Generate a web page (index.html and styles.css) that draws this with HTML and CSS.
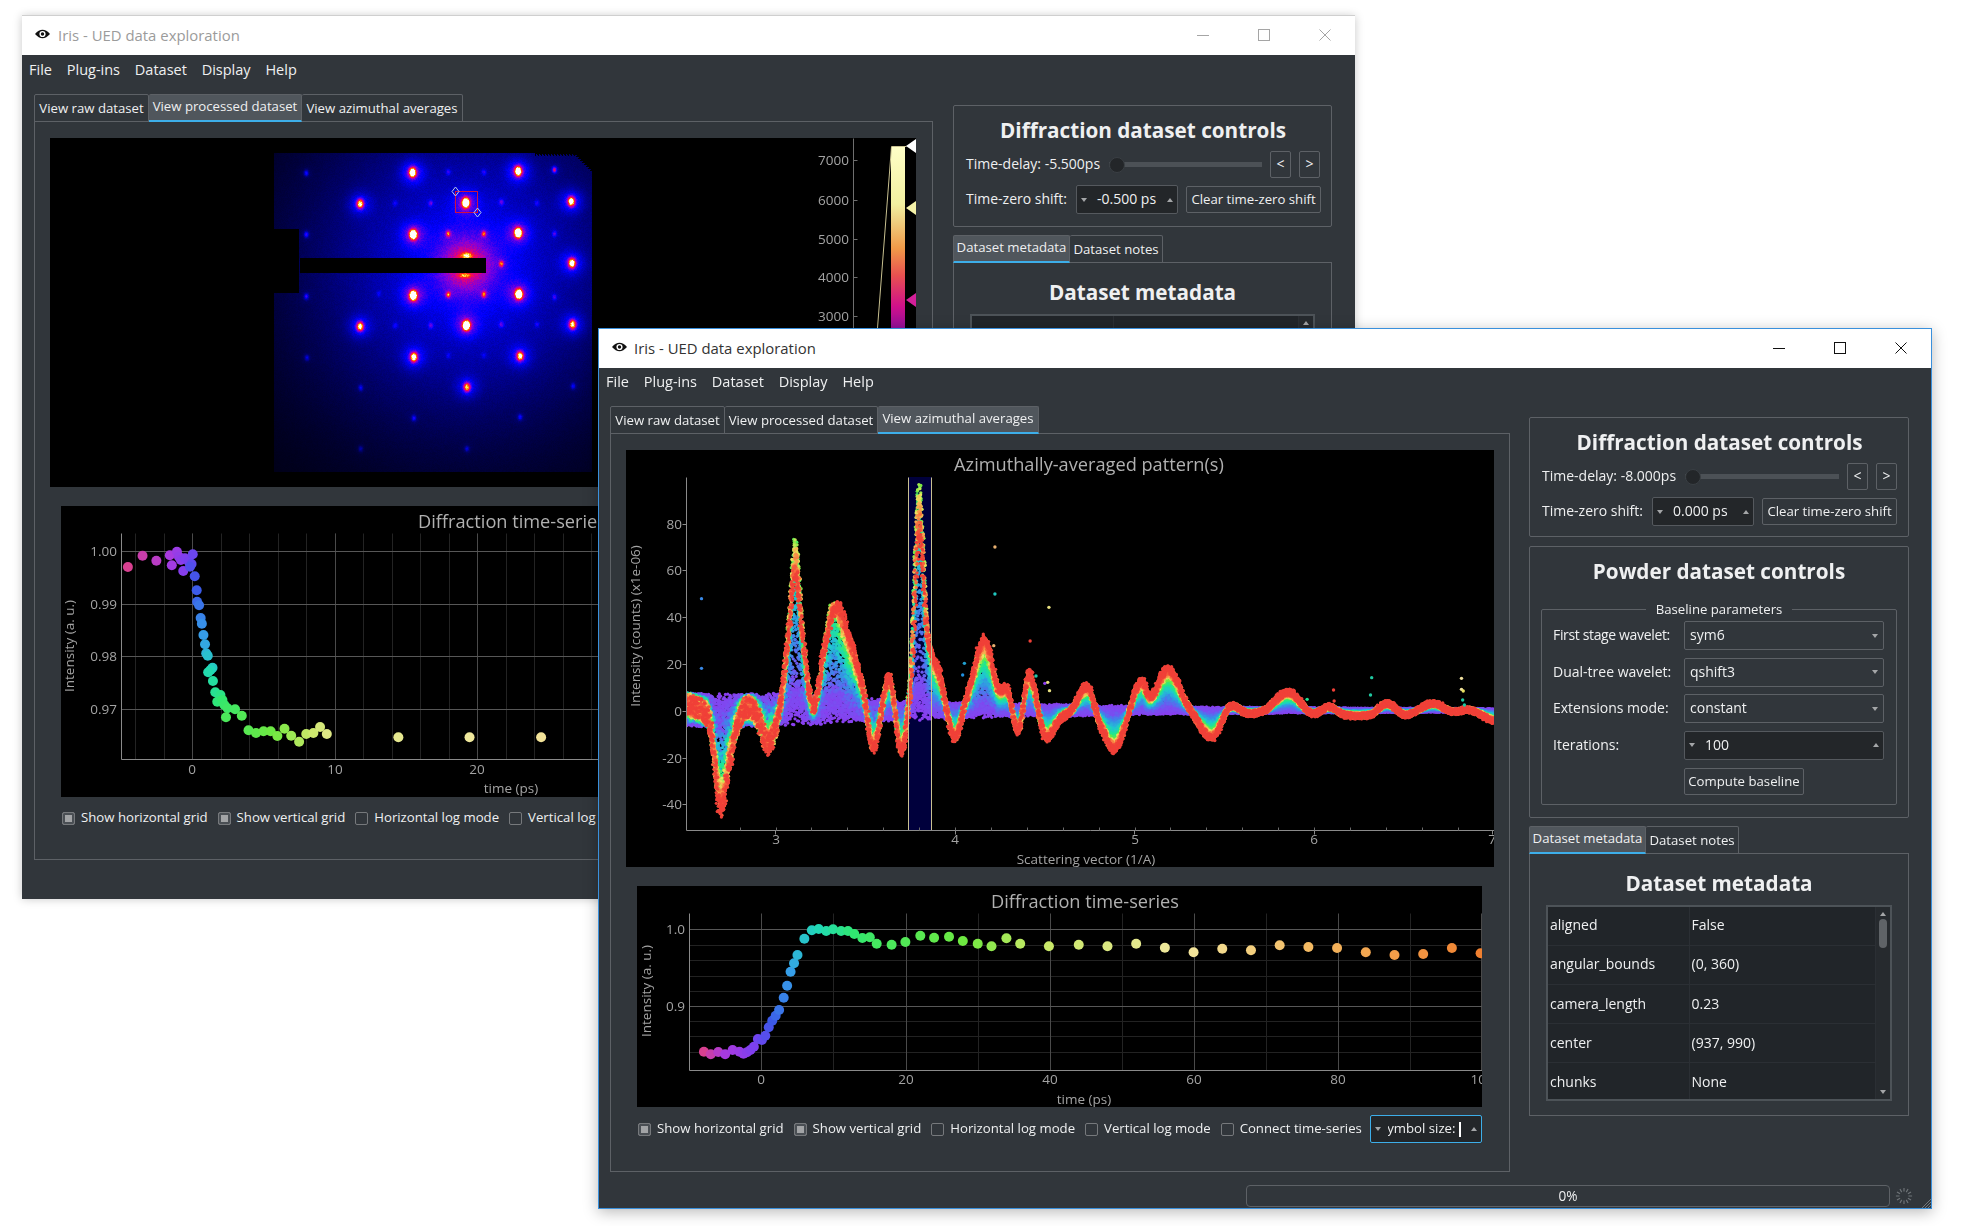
FILE: index.html
```html
<!DOCTYPE html>
<html lang="en">
<head>
<meta charset="utf-8">
<title>Iris - UED data exploration</title>
<link rel="stylesheet" href="styles.css">
<script src="script.js" defer></script>
</head>
<body>
<svg class="defs" width="0" height="0" aria-hidden="true">
  <symbol id="eye" viewBox="0 0 16 12"><path d="M0 6Q8-3 16 6Q8 15 0 6Z" fill="#111"/><circle cx="8" cy="6" r="3.3" fill="#fff"/><circle cx="8" cy="6" r="1.8" fill="#111"/></symbol>
  <symbol id="min" viewBox="0 0 12 12"><path d="M0 6.5H12" stroke="currentColor" fill="none"/></symbol>
  <symbol id="max" viewBox="0 0 12 12"><rect x=".5" y=".5" width="11" height="11" stroke="currentColor" fill="none"/></symbol>
  <symbol id="close" viewBox="0 0 12 12"><path d="M.5.5L11.5 11.5M11.5.5L.5 11.5" stroke="currentColor" fill="none"/></symbol>
</svg>
<main class="desktop">

<section class="window win-back">
  <header class="titlebar">
    <svg class="app-icon"><use href="#eye"/></svg>
    <span class="win-title">Iris - UED data exploration</span>
    <div class="win-buttons">
      <svg class="win-btn"><use href="#min"/></svg>
      <svg class="win-btn"><use href="#max"/></svg>
      <svg class="win-btn"><use href="#close"/></svg>
    </div>
  </header>
  <nav class="menubar"><span>File</span><span>Plug-ins</span><span>Dataset</span><span>Display</span><span>Help</span></nav>
  <div class="workspace">
    <div class="viewer">
      <div class="tabs">
        <span class="tab tab-raw">View raw dataset</span>
        <span class="tab tab-proc tab-on">View processed dataset</span>
        <span class="tab tab-azim">View azimuthal averages</span>
      </div>
      <div class="pane viewer-pane">
        <div class="plot plot-image">
          <canvas id="diffraction" width="866" height="349"></canvas>
          <svg class="labels" width="866" height="349">
            <text class="tick end" x="799" y="27">7000</text>
            <text class="tick end" x="799" y="67">6000</text>
            <text class="tick end" x="799" y="106">5000</text>
            <text class="tick end" x="799" y="144">4000</text>
            <text class="tick end" x="799" y="183">3000</text>
          </svg>
        </div>
        <div class="plot plot-series1">
          <canvas id="series1" width="845" height="291"></canvas>
          <svg class="labels" width="845" height="291">
            <text class="plot-title mid" x="451" y="22">Diffraction time-series</text>
            <text class="tick end" x="56" y="50">1.00</text>
            <text class="tick end" x="56" y="103">0.99</text>
            <text class="tick end" x="56" y="155">0.98</text>
            <text class="tick end" x="56" y="208">0.97</text>
            <text class="tick mid" transform="translate(13 140) rotate(-90)">Intensity (a. u.)</text>
            <text class="tick mid" x="131" y="268">0</text>
            <text class="tick mid" x="274" y="268">10</text>
            <text class="tick mid" x="416" y="268">20</text>
            <text class="tick mid" x="450" y="287">time (ps)</text>
          </svg>
        </div>
        <div class="check-row check-row-back">
          <label class="check on"><i></i>Show horizontal grid</label>
          <label class="check on"><i></i>Show vertical grid</label>
          <label class="check"><i></i>Horizontal log mode</label>
          <label class="check"><i></i>Vertical log mode</label>
        </div>
      </div>
    </div>
    <aside class="side">
      <div class="group group-controls">
        <h2>Diffraction dataset controls</h2>
        <div class="form-row">
          <span class="value-label">Time-delay: -5.500ps</span>
          <div class="slider"><i></i></div>
          <span class="btn btn-step">&lt;</span><span class="btn btn-step">&gt;</span>
        </div>
        <div class="form-row">
          <span class="shift-label">Time-zero shift:</span>
          <div class="spin spin-shift"><b class="arrow-down"></b><span>-0.500 ps</span><b class="arrow-up"></b></div>
          <span class="btn btn-clear">Clear time-zero shift</span>
        </div>
      </div>
      <div class="tabs">
        <span class="tab tab-meta tab-on">Dataset metadata</span>
        <span class="tab tab-notes">Dataset notes</span>
      </div>
      <div class="pane meta-pane">
        <h2>Dataset metadata</h2>
        <div class="meta-table">
          <table><tr><td>aligned</td><td>False</td></tr></table>
          <div class="scrollbar"><b class="arrow-up"></b><i></i><b class="arrow-down"></b></div>
        </div>
      </div>
    </aside>
  </div>
</section>

<section class="window win-front">
  <header class="titlebar">
    <svg class="app-icon"><use href="#eye"/></svg>
    <span class="win-title">Iris - UED data exploration</span>
    <div class="win-buttons">
      <svg class="win-btn"><use href="#min"/></svg>
      <svg class="win-btn"><use href="#max"/></svg>
      <svg class="win-btn"><use href="#close"/></svg>
    </div>
  </header>
  <nav class="menubar"><span>File</span><span>Plug-ins</span><span>Dataset</span><span>Display</span><span>Help</span></nav>
  <div class="workspace">
    <div class="viewer">
      <div class="tabs">
        <span class="tab tab-raw">View raw dataset</span>
        <span class="tab tab-proc">View processed dataset</span>
        <span class="tab tab-azim tab-on">View azimuthal averages</span>
      </div>
      <div class="pane viewer-pane">
        <div class="plot plot-pattern">
          <canvas id="pattern" width="868" height="417"></canvas>
          <svg class="labels" width="868" height="417">
            <text class="plot-title mid" x="463" y="21">Azimuthally-averaged pattern(s)</text>
            <text class="tick end" x="56" y="79">80</text>
            <text class="tick end" x="56" y="125">60</text>
            <text class="tick end" x="56" y="172">40</text>
            <text class="tick end" x="56" y="219">20</text>
            <text class="tick end" x="56" y="266">0</text>
            <text class="tick end" x="56" y="313">-20</text>
            <text class="tick end" x="56" y="359">-40</text>
            <text class="tick mid" transform="translate(14 176) rotate(-90)">Intensity (counts) (x1e-06)</text>
            <text class="tick mid" x="150" y="394">3</text>
            <text class="tick mid" x="329" y="394">4</text>
            <text class="tick mid" x="509" y="394">5</text>
            <text class="tick mid" x="688" y="394">6</text>
            <text class="tick mid" x="866" y="394">7</text>
            <text class="tick mid" x="460" y="414">Scattering vector (1/A)</text>
          </svg>
        </div>
        <div class="plot plot-series2">
          <canvas id="series2" width="845" height="221"></canvas>
          <svg class="labels" width="845" height="221">
            <text class="plot-title mid" x="448" y="22">Diffraction time-series</text>
            <text class="tick end" x="48" y="48">1.0</text>
            <text class="tick end" x="48" y="125">0.9</text>
            <text class="tick mid" transform="translate(14 105) rotate(-90)">Intensity (a. u.)</text>
            <text class="tick mid" x="124" y="198">0</text>
            <text class="tick mid" x="269" y="198">20</text>
            <text class="tick mid" x="413" y="198">40</text>
            <text class="tick mid" x="557" y="198">60</text>
            <text class="tick mid" x="701" y="198">80</text>
            <text class="tick mid" x="845" y="198">100</text>
            <text class="tick mid" x="447" y="218">time (ps)</text>
          </svg>
        </div>
        <div class="check-row">
          <label class="check on"><i></i>Show horizontal grid</label>
          <label class="check on"><i></i>Show vertical grid</label>
          <label class="check"><i></i>Horizontal log mode</label>
          <label class="check"><i></i>Vertical log mode</label>
          <label class="check"><i></i>Connect time-series</label>
          <div class="spin spin-symbol"><b class="arrow-down"></b><span class="clip"><span>Symbol size: </span><u></u></span><b class="arrow-up"></b></div>
        </div>
      </div>
    </div>
    <aside class="side">
      <div class="group group-controls">
        <h2>Diffraction dataset controls</h2>
        <div class="form-row">
          <span class="value-label">Time-delay: -8.000ps</span>
          <div class="slider"><i></i></div>
          <span class="btn btn-step">&lt;</span><span class="btn btn-step">&gt;</span>
        </div>
        <div class="form-row">
          <span class="shift-label">Time-zero shift:</span>
          <div class="spin spin-shift"><b class="arrow-down"></b><span>0.000 ps</span><b class="arrow-up"></b></div>
          <span class="btn btn-clear">Clear time-zero shift</span>
        </div>
      </div>
      <div class="group group-powder">
        <h2>Powder dataset controls</h2>
        <fieldset class="baseline">
          <legend>Baseline parameters</legend>
          <div class="form-grid">
            <span class="label-tight">First stage wavelet:</span><div class="combo">sym6<b class="arrow-down"></b></div>
            <span>Dual-tree wavelet:</span><div class="combo">qshift3<b class="arrow-down"></b></div>
            <span>Extensions mode:</span><div class="combo">constant<b class="arrow-down"></b></div>
            <span>Iterations:</span><div class="spin spin-iter"><b class="arrow-down"></b><span>100</span><b class="arrow-up"></b></div>
            <span></span><div class="btn btn-compute">Compute baseline</div>
          </div>
        </fieldset>
      </div>
      <div class="tabs">
        <span class="tab tab-meta tab-on">Dataset metadata</span>
        <span class="tab tab-notes">Dataset notes</span>
      </div>
      <div class="pane meta-pane">
        <h2>Dataset metadata</h2>
        <div class="meta-table">
          <table>
            <tr><td>aligned</td><td>False</td></tr>
            <tr><td>angular_bounds</td><td>(0, 360)</td></tr>
            <tr><td>camera_length</td><td>0.23</td></tr>
            <tr><td>center</td><td>(937, 990)</td></tr>
            <tr><td>chunks</td><td>None</td></tr>
          </table>
          <div class="scrollbar"><b class="arrow-up"></b><i></i><b class="arrow-down"></b></div>
        </div>
      </div>
    </aside>
  </div>
  <footer class="statusbar">
    <div class="progress">0%</div>
    <svg class="spinner" viewBox="0 0 20 20"><path d="M10 1V5M12.5 5.67L14.5 2.2M14.33 7.5L17.8 5.5M15 10H19M14.33 12.5L17.8 14.5M12.5 14.33L14.5 17.8M10 15V19M7.5 14.33L5.5 17.8M5.67 12.5L2.2 14.5M1 10H5M5.67 7.5L2.2 5.5M7.5 5.67L5.5 2.2" stroke="#6f7478" stroke-width="1.3" fill="none"/></svg>
    <svg class="grip" viewBox="0 0 10 10"><path d="M10 1L1 10M10 4L4 10M10 7L7 10" stroke="#72777b" fill="none"/></svg>
  </footer>
</section>
</main>
</body>
</html>
```
FILE: styles.css
```css
* { box-sizing: border-box; }
html, body { margin: 0; padding: 0; background: #fff; }
body { width: 1961px; height: 1226px; overflow: hidden; font: 14px/1.2 "Open Sans", "Noto Sans", sans-serif; color: #eff0f1; }
.defs { position: absolute; }
.desktop { position: relative; width: 1961px; height: 1226px; }

.window { position: absolute; display: flex; flex-direction: column; background: #31363b; overflow: hidden; }
.win-back { left: 22px; top: 16px; width: 1333px; height: 883px; box-shadow: 0 -1px 0 #cfcfcf, 0 0 9px rgba(0,0,0,.22); }
.win-front { left: 598px; top: 328px; width: 1334px; height: 881px; border: 1px solid #3a90dc; box-shadow: 0 3px 14px rgba(0,0,0,.28); }

.titlebar { flex: none; height: 39px; display: flex; align-items: center; background: #fff; padding-left: 13px; color: #333; font-size: 14.9px; }
.win-back .titlebar { color: #9b9b9b; }
.app-icon { width: 15px; height: 12px; margin-right: 7px; margin-top: -3px; }
.win-back .app-icon { margin-right: 8px; }
.win-title { margin-top: 1px; }
.win-buttons { margin-left: auto; display: flex; gap: 49px; padding-right: 24px; color: #111; margin-top: -1px; }
.win-back .win-buttons { color: #a5a5a5; }
.win-btn { width: 12px; height: 12px; }

.menubar { flex: none; height: 28px; display: flex; align-items: center; gap: 14.8px; padding-left: 7px; font-size: 14.5px; }
.win-back .menubar { height: 29px; }

.workspace { flex: none; display: flex; margin-top: 10px; padding-left: 11px; gap: 19px; }
.win-back .workspace { padding-left: 12px; gap: 20px; }
.viewer { flex: none; width: 900px; }
.win-back .viewer { width: 899px; }
.side { flex: none; width: 380px; padding-top: 11px; display: flex; flex-direction: column; }
.win-back .side { width: 379px; }

.tabs { display: flex; height: 27px; }
.tab { flex: none; height: 28px; display: flex; align-items: center; justify-content: center; border: 1px solid #5d6166; border-left: 0; border-radius: 2px 2px 0 0; font-size: 13.2px; padding-top: 1px; white-space: nowrap; position: relative; z-index: 1; }
.tab:first-child { border-left: 1px solid #5d6166; }
.tab-on { background: #50565c; border-bottom: 2px solid #3daee9; padding-top: 0; padding-bottom: 2px; }
.tab-raw { width: 115px; }
.tab-proc { width: 153px; }
.tab-azim { width: 161px; }
.tab-meta { width: 117px; }
.tab-notes { width: 93px; }

.pane { border: 1px solid #5d6166; background: #31363b; }
.viewer-pane { height: 739px; padding: 16px 15px 0; }

.plot { position: relative; background: #000; overflow: hidden; }
.plot canvas { display: block; }
.labels { position: absolute; left: 0; top: 0; }
.labels text { font-family: "Open Sans", "Noto Sans", sans-serif; }
.tick { font-size: 13.5px; fill: #a3a3a3; }
.plot-title { font-size: 18.2px; fill: #b0b0b0; }
.mid { text-anchor: middle; }
.end { text-anchor: end; }

.plot-pattern { width: 868px; height: 417px; }
.plot-image { width: 866px; height: 349px; }
.plot-series1 { width: 845px; height: 291px; margin: 19px 0 0 11px; }
.plot-series2 { width: 845px; height: 221px; margin: 19px 0 0 11px; }

.check-row { display: flex; align-items: center; height: 28px; width: 845px; margin: 8px 0 0 12px; gap: 10px; }
.check-row-back { margin-top: 7px; width: 900px; white-space: nowrap; }
.check { display: flex; align-items: center; gap: 6px; font-size: 13.2px; white-space: nowrap; }
.check i { width: 13px; height: 13px; border: 1px solid #76797c; border-radius: 2px; background: #31363b; }
.check.on i { background: #a2a4a6; box-shadow: inset 0 0 0 2px #4a4f54; }

.spin { display: flex; align-items: center; background: #232629; border: 1px solid #55595e; border-radius: 2px; }
.spin b { flex: none; }
.spin-shift { flex: none; width: 102px; height: 29px; padding: 0 4px; gap: 10px; }
.spin-shift span { flex: 1; }
.spin-iter { height: 29px; padding: 0 4px; gap: 10px; }
.spin-iter span { flex: 1; }
.spin-symbol { flex: none; width: 112px; height: 28px; margin-left: -2px; border-color: #3daee9; padding: 0 4px; justify-content: space-between; font-size: 13.2px; }
.clip { width: 76px; overflow: hidden; display: flex; justify-content: flex-end; align-items: center; }
.clip span { flex: none; white-space: pre; }
.clip u { flex: none; width: 2px; height: 15px; margin-right: 3px; background: #fff; }

.arrow-up, .arrow-down { display: block; width: 0; height: 0; border-left: 3.5px solid transparent; border-right: 3.5px solid transparent; }
.arrow-up { border-bottom: 4px solid #a4a6a8; }
.arrow-down { border-top: 4px solid #a4a6a8; }

.group { border: 1px solid #5d6166; border-radius: 2px; flex: none; }
.group h2, .meta-pane h2 { margin: 0; font-size: 20.7px; font-weight: 700; text-align: center; line-height: 42px; }
.group-controls { height: 120px; padding: 3px 11px 0 12px; margin-bottom: 9px; }
.win-back .group-controls { height: 122px; margin-bottom: 8px; }
.group-powder { height: 272px; margin-bottom: 8px; }
.group-powder h2 { line-height: 48px; }

.form-row { display: flex; align-items: center; }
.form-row + .form-row { margin-top: 7px; }
.value-label { flex: none; margin-right: 9px; }
.shift-label { flex: none; width: 110px; }
.slider { flex: 1; height: 16px; position: relative; margin-right: 8px; display: flex; align-items: center; background: linear-gradient(#4c5156, #4c5156) no-repeat 0 50% / 100% 5px; border-radius: 3px; }
.slider i { width: 16px; height: 16px; border-radius: 50%; background: #232629; border: 1px solid #3a3f44; }
.btn { display: flex; align-items: center; justify-content: center; border: 1px solid #5d6166; border-radius: 2px; background: #31363b; }
.btn-step { flex: none; width: 21px; height: 27px; }
.btn-step + .btn-step { margin-left: 8px; }
.btn-clear { flex: none; width: 135px; height: 27px; margin-left: 8px; font-size: 13.2px; white-space: nowrap; }

.baseline { border: 1px solid #5d6166; border-radius: 2px; margin: 4px 11px 0; padding: 0 12px; height: 206px; min-width: 0; }
.baseline legend { margin: 0 auto; padding: 0 10px; line-height: 20px; font-size: 13.2px; }
.form-grid { display: grid; grid-template-columns: 130px 200px; grid-auto-rows: 29px; row-gap: 7.6px; align-items: center; margin-top: 2px; }
.form-grid > span { margin-left: -1px; }
.label-tight { letter-spacing: -.35px; }
.combo { height: 29px; display: flex; align-items: center; justify-content: space-between; padding: 0 5px; border: 1px solid #5d6166; border-radius: 2px; }
.spin-iter { width: 200px; }
.btn-compute { width: 120px; height: 27px; font-size: 13.2px; white-space: nowrap; }

.meta-pane { height: 263px; padding: 8px 16px 0; }
.meta-pane h2 { line-height: 42px; margin-bottom: 1px; }
.meta-table { display: flex; height: 196px; border: 2px solid #4d5358; background: #212529; overflow: hidden; }
.meta-table table { flex: 1; border-collapse: collapse; table-layout: fixed; height: 0; }
.meta-table td { height: 39.3px; padding: 0 0 0 2px; border-bottom: 1px solid #2b2f34; border-right: 1px solid #2b2f34; font-size: 14px; }
.meta-table td:first-child { width: 141px; }
.meta-table tr:first-child td { height: 38px; }
.scrollbar { flex: none; width: 14px; display: flex; flex-direction: column; align-items: center; background: #262a2e; padding: 5px 0; }
.scrollbar i { display: block; width: 8px; height: 29px; margin: 3px 0 auto; border-radius: 4px; background: #5f6367; }

.statusbar { flex: none; display: flex; align-items: center; height: 22px; margin-top: 13px; position: relative; }
.progress { width: 644px; height: 22px; margin-left: 647px; display: flex; align-items: center; justify-content: center; border: 1px solid #5d6166; border-radius: 4px; font-size: 13.6px; }
.spinner { width: 18px; height: 18px; margin-left: 5px; }
.grip { position: absolute; right: 0; bottom: -1px; width: 10px; height: 10px; }
```
FILE: script.js
```js
(function () {
  var seed = 12345;
  function rnd() { seed = (seed * 1664525 + 1013904223) >>> 0; return seed / 4294967296; }
  function hex(c) { return [parseInt(c.slice(1, 3), 16), parseInt(c.slice(3, 5), 16), parseInt(c.slice(5, 7), 16)]; }
  function ramp(stops) {
    var s = stops.map(function (p) { return [p[0], hex(p[1])]; });
    return function (t) {
      if (t <= s[0][0]) return s[0][1];
      for (var i = 1; i < s.length; i++) {
        if (t <= s[i][0]) {
          var k = (t - s[i - 1][0]) / (s[i][0] - s[i - 1][0]);
          return [0, 1, 2].map(function (j) { return s[i - 1][1][j] + (s[i][1][j] - s[i - 1][1][j]) * k; });
        }
      }
      return s[s.length - 1][1];
    };
  }
  function css(c) { return 'rgb(' + Math.round(c[0]) + ',' + Math.round(c[1]) + ',' + Math.round(c[2]) + ')'; }
  function line(g, x1, y1, x2, y2, color) {
    g.strokeStyle = color; g.beginPath(); g.moveTo(x1 + .5, y1 + .5); g.lineTo(x2 + .5, y2 + .5); g.stroke();
  }

  /* ---------- diffraction image ---------- */
  function drawDiffraction() {
    var cv = document.getElementById('diffraction'), g = cv.getContext('2d');
    g.fillStyle = '#000'; g.fillRect(0, 0, cv.width, cv.height);
    var map = ramp([[0, '#000000'], [.3, '#0000ff'], [.46, '#7a00e0'], [.6, '#e00080'], [.72, '#ff2020'], [.84, '#ff9a00'], [.94, '#ffee60'], [1, '#ffffff']]);
    var ox = 275, oy = 153, w = 318, h = 319;
    var big = [[661, 516, 1], [830, 512, 1], [662, 702, 1.15], [830, 697, 1.15], [662, 885, 1.15], [831, 881, 1.15], [747, 975, 1.15], [746, 607, 1.15], [915, 603, .85], [916, 788, .85], [577, 610, .72], [577, 978, .72], [917, 972, .72], [663, 1070, .8], [833, 1067, .72], [748, 1160, .62]];
    var small = [[491, 518, .22], [491, 702, .24], [491, 888, .24], [492, 1072, .16], [578, 1162, .18], [918, 1157, .18], [663, 1253, .2], [833, 1250, .2], [748, 1345, .15], [578, 1345, .12], [888, 508, .42], [718, 700, .46], [775, 700, .42], [718, 882, .46], [775, 882, .46], [803, 790, .46], [690, 608, .2], [803, 605, .2], [718, 515, .16], [775, 515, .15], [633, 608, .12], [690, 975, .2], [803, 972, .18], [633, 975, .12], [860, 972, .12], [860, 608, .14], [607, 790, .1], [607, 880, .1], [888, 890, .18], [888, 700, .2], [718, 1065, .1], [775, 1065, .1]];
    var spots = [];
    big.forEach(function (s) {
      spots.push([s[0] / 1.6, s[1] / 3, s[2] * 1.05, 2.35, .24 * Math.min(s[2], 1), 8]);
    });
    small.forEach(function (s) {
      spots.push([s[0] / 1.6, s[1] / 3, s[2], 1.5, s[2] * .12, 4]);
    });
    var img = g.createImageData(w, h), d = img.data;
    for (var y = 0; y < h; y++) {
      for (var x = 0; x < w; x++) {
        var X = x + ox, Y = y + oy, i = (y * w + x) * 4;
        var jag = (X * 7 + Y * 3) % 4;
        var hide = (X < 300 && Y > 228 && Y < 293) ||
          (X > 300 && X < 487 && Y > 257 && Y < 273) ||
          (X > 535 && X <= 575 && Y < 154 + (X % 3)) ||
          (X > 575 && Y < 152 + (X - 575) + jag);
        var v = 0;
        if (!hide) {
          var dx = X - 467, dy = Y - 265, r2 = dx * dx + dy * dy;
          v = .21 * Math.exp(-r2 / (2 * 100 * 100)) + .06 * Math.exp(-r2 / (2 * 170 * 170)) + .01;
          v += .27 * Math.exp(-r2 / (2 * 17 * 17)) + .12 * Math.exp(-r2 / (2 * 30 * 30));
          v += .42 * Math.exp(-((X - 467) * (X - 467) / 30 + (Y - 255) * (Y - 255) / 8));
          v += .3 * Math.exp(-((X - 465) * (X - 465) / 30 + (Y - 275) * (Y - 275) / 5));
          for (var s = 0; s < spots.length; s++) {
            var p = spots[s], ax = X - p[0], ay = Y - p[1];
            if (Math.abs(ax) > 28 || Math.abs(ay) > 28) continue;
            var a2 = ax * ax + ay * ay;
            v += p[2] * Math.exp(-(ax * ax / (2 * p[3] * p[3]) + ay * ay / (2 * p[3] * p[3] * 1.8)));
            v += p[4] * Math.exp(-a2 / (2 * p[5] * p[5]));
          }
          v *= .92 + rnd() * .16;
        }
        var c = map(Math.min(v, 1));
        d[i] = c[0]; d[i + 1] = c[1]; d[i + 2] = c[2]; d[i + 3] = 255;
      }
    }
    g.putImageData(img, ox - 51, oy - 138);

    /* region of interest */
    g.lineWidth = 1;
    g.strokeStyle = '#d01040'; g.strokeRect(405.5, 53.5, 22, 21);
    g.strokeStyle = '#b8c8e8';
    [[405.5, 53.5], [427.5, 74.5]].forEach(function (q) {
      g.beginPath(); g.moveTo(q[0] - 3.5, q[1]); g.lineTo(q[0], q[1] - 4.5); g.lineTo(q[0] + 3.5, q[1]); g.lineTo(q[0], q[1] + 4.5); g.closePath(); g.stroke();
    });

    /* histogram axis and colour bar */
    line(g, 803, 0, 803, 349, '#6e6e6e');
    [22, 62, 101, 139, 178].forEach(function (y) { line(g, 803, y, 807, y, '#6e6e6e'); });
    var grad = g.createLinearGradient(0, 8, 0, 349);
    [[0, '#ffffc8'], [.17, '#f2f0a0'], [.22, '#efcf80'], [.3, '#f09a48'], [.38, '#e85050'], [.47, '#d0108a'], [.56, '#7a10a0'], [.8, '#1a0a60'], [1, '#000']].forEach(function (s) { grad.addColorStop(s[0], s[1]); });
    g.fillStyle = grad; g.fillRect(841, 9, 14, 340);
    line(g, 841, 8, 856, 8, '#c8c090');
    g.strokeStyle = '#c8c090'; g.beginPath(); g.moveTo(841.5, 8.5); g.lineTo(827.5, 190); g.stroke();
    [[8, '#ffffff'], [70, '#f4f2a8'], [162, '#d4209a']].forEach(function (h2) {
      g.fillStyle = h2[1]; g.beginPath(); g.moveTo(856, h2[0]); g.lineTo(866, h2[0] - 7); g.lineTo(866, h2[0] + 7); g.closePath(); g.fill();
    });
  }

  /* ---------- time series ---------- */
  var seriesRamp = ramp([[0, '#d84090'], [.05, '#a83ae0'], [.16, '#7a40f0'], [.24, '#3c58e8'], [.33, '#36a0e8'], [.41, '#20d8b8'], [.5, '#30e870'], [.66, '#70e840'], [.74, '#c8e868'], [.82, '#f2e8a0'], [.9, '#f4b860'], [1, '#f08030']]);
  function drawSeries(id, o) {
    var cv = document.getElementById(id), g = cv.getContext('2d');
    g.fillStyle = '#000'; g.fillRect(0, 0, cv.width, cv.height);
    g.lineWidth = 1;
    o.minorX.forEach(function (x) { line(g, x, o.top, x, o.bottom, '#232323'); });
    o.minorY.forEach(function (y) { line(g, o.left, y, cv.width, y, o.minorYColor); });
    o.majorX.forEach(function (x) { line(g, x, o.top, x, o.bottom, '#4a4a4a'); });
    o.majorY.forEach(function (y) { line(g, o.left, y, cv.width, y, '#575757'); });
    line(g, o.left, o.top, o.left, o.bottom, '#8a8a8a');
    line(g, o.left, o.bottom, cv.width, o.bottom, '#8a8a8a');
    o.points.forEach(function (p, i) {
      var t = o.tone ? o.tone(i) : i / (o.points.length - 1);
      g.fillStyle = css(seriesRamp(t));
      g.beginPath(); g.arc(o.fx(p[0]), o.fy(p[1]), 5, 0, Math.PI * 2); g.fill();
    });
  }
  function steps(from, to, step) { var a = []; for (var v = from; v <= to; v += step) a.push(Math.round(v)); return a; }

  function drawSeries1() {
    var pts = [[326, 231], [363, 197], [398, 212], [432, 196], [437, 226], [450, 185], [455, 200], [460, 210], [466, 243], [470, 205], [480, 215], [490, 193], [487, 222], [483, 230], [495, 259], [500, 301], [501, 335], [506, 346], [510, 384], [513, 401], [517, 435], [521, 463], [524, 490], [528, 497], [540, 533], [535, 540], [529, 547], [541, 573], [547, 607], [560, 615], [552, 635], [565, 630], [570, 645], [578, 655], [597, 658], [574, 682], [614, 677], [631, 721], [650, 729], [669, 724], [687, 724], [704, 738], [722, 716], [739, 737], [759, 755], [777, 732], [795, 729], [812, 711], [829, 732], [1010, 742], [1190, 742], [1371, 742]];
    drawSeries('series1', {
      left: 60, top: 27, bottom: 253, minorYColor: '#1a1a1a',
      minorX: steps(131 - 57, 845, 28.5), minorY: [],
      majorX: [131, 274, 416, 559, 701, 844], majorY: [45, 98, 150, 203],
      points: pts,
      tone: function (i) { return i / 51 * .83; },
      fx: function (z) { return z / 2.529 - 62; },
      fy: function (z) { return 490 + z / 3 - 506; }
    });
  }
  function drawSeries2() {
    var pts = [[181, 545], [193, 553], [206, 546], [218, 553], [231, 540], [243, 545], [250, 551], [256, 547], [262, 540], [268, 530], [275, 507], [282, 510], [288, 497], [294, 472], [300, 452], [306, 437], [312, 420], [320, 383], [326, 347], [332, 305], [338, 280], [344, 255], [356, 206], [369, 181], [381, 177], [394, 183], [406, 178], [420, 183], [432, 183], [443, 192], [457, 204], [470, 202], [482, 221], [508, 224], [532, 216], [558, 197], [582, 203], [608, 200], [632, 213], [658, 221], [682, 229], [708, 205], [732, 221], [782, 229], [834, 224], [884, 229], [934, 221], [984, 233], [1034, 247], [1084, 236], [1134, 241], [1184, 226], [1234, 231], [1284, 234], [1334, 247], [1384, 255], [1434, 252], [1484, 234], [1534, 250]];
    drawSeries('series2', {
      left: 52, top: 27, bottom: 184, minorYColor: '#222222',
      minorX: [196, 341, 485, 629, 773], minorY: [59, 74, 90, 105, 135, 150, 166],
      majorX: [124, 269, 413, 557, 701, 844], majorY: [43, 120],
      points: pts,
      tone: function (i) { return i / 58; },
      fx: function (z) { return 600 + z / 1.742 - 637; },
      fy: function (z) { return 870 + z / 3 - 886; }
    });
  }

  /* ---------- azimuthal pattern ---------- */
  function drawPattern() {
    var cv = document.getElementById('pattern'), g = cv.getContext('2d');
    g.fillStyle = '#000'; g.fillRect(0, 0, cv.width, cv.height);
    var fx = function (z) { return 590 + z / 1.704 - 626; };
    var fy = function (z) { return 420 + z / 3 - 450; };

    /* selected region */
    g.fillStyle = '#00003c'; g.fillRect(282, 27, 24, 353);

    var R = [[100, 850], [163, 850], [190, 870], [205, 920], [222, 1170], [235, 1060], [250, 920], [268, 860], [285, 890], [305, 975], [325, 850], [340, 620], [350, 470], [362, 650], [380, 860], [400, 680], [420, 560], [440, 640], [465, 800], [483, 985], [510, 770], [530, 995], [548, 780], [560, 350], [575, 650], [597, 770], [620, 955], [640, 840], [672, 655], [695, 800], [712, 810], [730, 935], [748, 760], [775, 950], [800, 900], [820, 870], [848, 800], [870, 920], [897, 985], [937, 785], [955, 830], [985, 745], [1020, 860], [1060, 955], [1090, 860], [1120, 880], [1150, 870], [1190, 815], [1230, 880], [1260, 860], [1285, 885], [1330, 885], [1358, 850], [1390, 885], [1435, 850], [1470, 875], [1500, 870], [1540, 905], [1600, 920]];
    function curve(x) {
      for (var i = 1; i < R.length - 2; i++) {
        if (x <= R[i + 1][0]) {
          var t = (x - R[i][0]) / (R[i + 1][0] - R[i][0]), p0 = R[i - 1][1], p1 = R[i][1], p2 = R[i + 1][1], p3 = R[i + 2][1];
          return .5 * (2 * p1 + (p2 - p0) * t + (2 * p0 - 5 * p1 + 4 * p2 - p3) * t * t + (3 * p1 - p0 - 3 * p2 + p3) * t * t * t);
        }
      }
      return R[R.length - 1][1];
    }
    function gauss(x, c, s) { return Math.exp(-(x - c) * (x - c) / (2 * s * s)); }
    function amp(x, s) {
      var a = 873 - curve(x);
      var mid = a * .78 + 200 * gauss(x, 350, 8) + 275 * gauss(x, 560, 9) + 90 * gauss(x, 410, 9);
      if (s < .62) return mid * Math.pow(s / .62, .75);
      return mid + (a - mid) * (s - .62) / .38;
    }
    var map = ramp([[0, '#8a3ff0'], [.1, '#6a5cf0'], [.24, '#3a8ae8'], [.38, '#20c8d0'], [.52, '#20e890'], [.63, '#70e840'], [.7, '#e8e860'], [.78, '#f8b050'], [.88, '#f87040'], [1, '#f04038']]);
    var traces = [], i;
    for (i = 0; i < 16; i++) traces.push(i / 15 * .04);
    for (i = 0; i < 40; i++) traces.push(.05 + Math.pow(i / 39, .85) * .95);
    for (i = 0; i < 3; i++) traces.push(1);
    g.save();
    g.beginPath(); g.rect(61, 0, 807, 380); g.clip();
    traces.forEach(function (s, n) {
      g.fillStyle = css(map(s));
      var step = n < 16 ? 1.2 : 1;
      for (var px = 61; px < 868; px += step) {
        var z = (px + 36) * 1.704;
        var band = z < 300 ? 50 : 50 * Math.exp(-(z - 300) / 420) + 3;
        var early = Math.pow(1 - s, 1.6);
        var extra = s * (z < 320 ? 62 * (1 - s * .5) : 9 + 12 * Math.exp(-(z - 320) / 350));
        var base = 873 - amp(z, s) - 2 * (1 - s);
        var y = base + (rnd() * 2 - 1) * (band * early + extra);
        var xj = px + (rnd() * 2 - 1) * 1.8 * s;
        g.beginPath(); g.arc(xj, fy(y), 1.65, 0, Math.PI * 2); g.fill();
      }
    });
    g.restore();

    [[190, 536, '#3a8ae8'], [190, 745, '#3a8ae8'], [690, 381, '#e8b070'], [690, 522, '#20c8c0'], [782, 562, '#e8e080'], [750, 663, '#f04038'], [688, 677, '#e8b070'], [638, 730, '#20a0d0'], [635, 765, '#2090e0'], [745, 753, '#f04038'], [760, 768, '#20c8b0'], [775, 790, '#9040f0'], [780, 787, '#e8e080'], [783, 812, '#e8e080'], [1222, 838, '#20e090'], [1267, 810, '#f04038'], [1268, 843, '#f04038'], [1332, 773, '#20c8a0'], [1330, 825, '#20c8a0'], [1485, 775, '#f0e0a0'], [1485, 808, '#f0e0a0'], [1488, 813, '#e8e060'], [1487, 840, '#20c8a0'], [1490, 855, '#20c8a0']].forEach(function (p) {
      g.fillStyle = p[2]; g.beginPath(); g.arc(fx(p[0]), fy(p[1]), 1.7, 0, Math.PI * 2); g.fill();
    });

    g.lineWidth = 1;
    line(g, 282, 27, 282, 380, '#c8c090');
    line(g, 305, 27, 305, 380, '#c8c090');
    line(g, 60, 27, 60, 380, '#8a8a8a');
    line(g, 60, 380, 868, 380, '#8a8a8a');
    for (var q = 0; q < 24; q++) {
      var tx = Math.round(149.5 + (q - 1) * 35.9);
      if (tx > 60) line(g, tx, 377, tx, 380, '#6a6a6a');
    }
    [149, 329, 508, 688, 866].forEach(function (x) { line(g, x, 380, x, 384, '#8a8a8a'); });
    [74, 120, 167, 214, 261, 308, 354].forEach(function (y) { line(g, 56, y, 60, y, '#8a8a8a'); });
  }

  drawDiffraction();
  drawSeries1();
  drawSeries2();
  drawPattern();
})();
```
